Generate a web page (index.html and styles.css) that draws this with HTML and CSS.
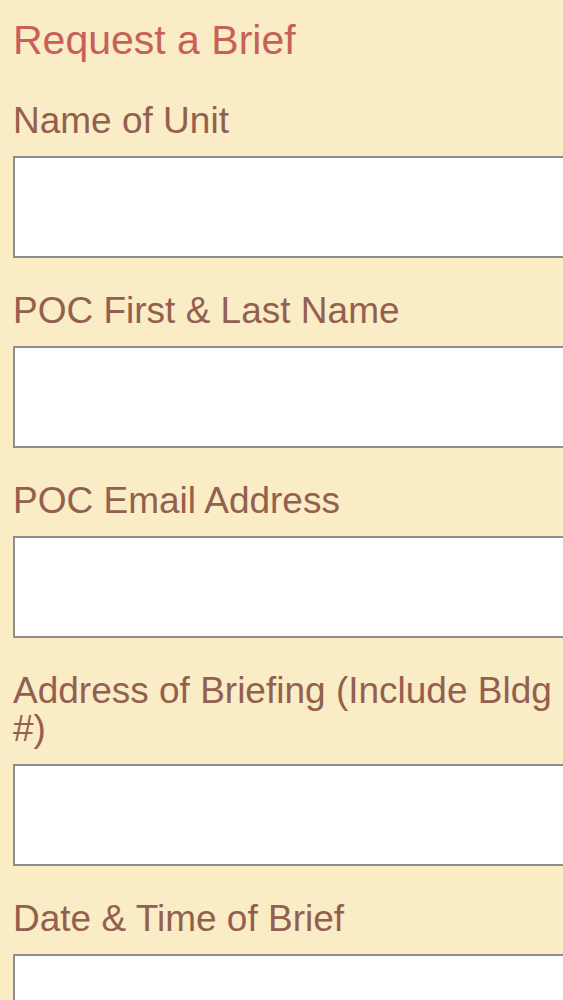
FILE: index.html
```html
<!DOCTYPE html>
<html lang="en">
<head>
<meta charset="utf-8">
<title>Request a Brief</title>
<link rel="stylesheet" href="styles.css">
</head>
<body>
<form class="brief-form">
  <h2 class="form-title">Request a Brief</h2>
  <div class="field">
    <label class="field-label" for="unit">Name of Unit</label>
    <input class="field-input" id="unit" type="text">
  </div>
  <div class="field">
    <label class="field-label" for="poc">POC First &amp; Last Name</label>
    <input class="field-input" id="poc" type="text">
  </div>
  <div class="field">
    <label class="field-label" for="email">POC Email Address</label>
    <input class="field-input" id="email" type="text">
  </div>
  <div class="field">
    <label class="field-label" for="addr">Address of Briefing (Include Bldg #)</label>
    <input class="field-input" id="addr" type="text">
  </div>
  <div class="field">
    <label class="field-label" for="date">Date &amp; Time of Brief</label>
    <input class="field-input" id="date" type="text">
  </div>
</form>
</body>
</html>
```
FILE: styles.css
```css
html, body {
  margin: 0;
  padding: 0;
  overflow-x: hidden;
  background: #faecc5;
}

body {
  font-family: "Liberation Sans", Arial, sans-serif;
}

.brief-form {
  display: flex;
  flex-direction: column;
  padding: 17px 0 0 13px;
  overflow: hidden;
}

.form-title {
  margin: 0 0 39px 0;
  font-size: 41px;
  line-height: 46px;
  font-weight: normal;
  color: #c8605a;
}

.field {
  display: flex;
  flex-direction: column;
  margin-bottom: 34px;
}

.field-label {
  display: block;
  margin-bottom: 16px;
  font-size: 37px;
  line-height: 38px;
  color: #93604f;
  padding-right: 6px;
}

.field-input {
  box-sizing: border-box;
  width: calc(100% + 20px);
  height: 102px;
  margin: 0;
  border: 2px solid #8e8e8e;
  background: #ffffff;
  font-size: 30px;
}
```
